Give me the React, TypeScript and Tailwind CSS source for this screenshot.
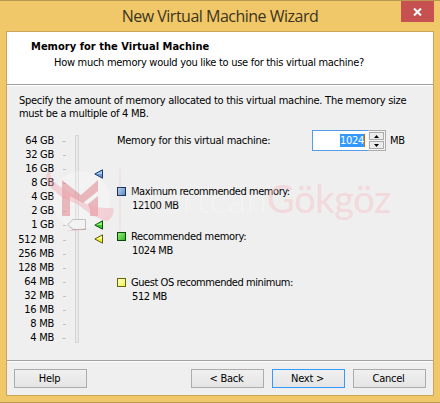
import React from "react";

const labels = ["64 GB", "32 GB", "16 GB", "8 GB", "4 GB", "2 GB", "1 GB", "512 MB", "256 MB", "128 MB", "64 MB", "32 MB", "16 MB", "8 MB", "4 MB"];

const wizardFont = "font-['DejaVu_Sans_Condensed','DejaVu_Sans',sans-serif]";

function Marker({ light, dark, edge }: { light: string; dark: string; edge: string }) {
  return (
    <svg width="10" height="10" viewBox="0 0 10 10" className="block">
      <path d="M0.8 5 L8.5 0.8 V9.2 Z" fill={dark} stroke={edge} />
      <path d="M2.5 5 L8 2 V5 Z" fill={light} />
    </svg>
  );
}

function Legend({ title, value, color, tracking }: { title: string; value: string; color: string; tracking: string }) {
  return (
    <div className="flex items-start">
      <span className={`mt-[3px] block h-[9px] w-[9px] border ${color}`} />
      <div className="ml-[5px] whitespace-nowrap pt-px leading-[14px]">
        <div className={tracking}>{title}</div>
        <div className="ml-px tracking-[-0.4px]">{value}</div>
      </div>
    </div>
  );
}

function Button({ children, active }: { children: React.ReactNode; active?: boolean }) {
  return (
    <button className={`h-[19px] w-[73px] border bg-linear-to-b from-[#f0f0f0] to-[#e5e5e5] pr-[2px] pt-px leading-[16px] ${active ? "border-[#3399ff]" : "border-[#acacac]"}`}>
      {children}
    </button>
  );
}

function Watermark() {
  return (
    <svg width="440" height="90" viewBox="0 160 440 90" className="pointer-events-none absolute left-0 top-[159px]">
      <circle cx="81" cy="200" r="29" fill="#fff" opacity=".25" />
      <g fill="#d8606c" opacity=".4">
        <path d="M62 180 L81 195 L98 180 V191 L83 203 L70 196 V216 H62 Z" />
        <path d="M88 204 L98 196 V216 H90 V210 Z" />
      </g>
      <path d="M51 173 C49 178 55 184 63 188 L83 202 C93 208 103 208 113 208 C115 210 112 220 107 221 C96 219 85 210 77 204 C68 200 60 197 56 192 C48 186 44 178 47 173 C48 171 51 171 51 173 Z" fill="#f0a4ae" opacity=".42" />
      <path d="M66 231.500 C70 229.500 76 230 86 228 C82 231 73 230 66 231.500 Z" fill="#f0a4ae" opacity=".6" />
      <path d="M120 169 V231" stroke="#f0a4ae" strokeWidth="2" opacity=".15" />
      <text x="128" y="213" textLength="139" fontFamily="Lato" fontWeight="300" fontSize="38" fill="#fff" opacity=".25">Mertcan</text>
      <text x="267" y="213" textLength="124" fontFamily="Lato" fontSize="38" fill="#f5bfc7" opacity=".45">Gökgöz</text>
    </svg>
  );
}

export default function App() {
  return (
    <div className={`relative flex h-[403px] w-[440px] flex-col border-y border-[#b99850] bg-[#f0c869] px-[6px] text-[11px] tracking-[-0.27px] text-black ${wizardFont}`}>
      <div className="relative flex h-[30px] items-center justify-center font-['Open_Sans',sans-serif] text-[16px] tracking-[-0.5px] text-[#3c3420]">
        <span className="whitespace-nowrap">New Virtual Machine Wizard</span>
        <span className="absolute right-0 top-0 flex h-[21px] w-[33px] items-center justify-center bg-[#c75050]">
          <svg width="9" height="8" viewBox="0 0 9 8"><path d="M1 .5 L8 7.500 M8 .5 L1 7.500" stroke="#fff" strokeWidth="2" /></svg>
        </span>
      </div>
      <div className="flex h-[365px] flex-col border border-[#c9a557] bg-[#efefef]">
        <header className="h-[53px] border-b border-[#a0a0a0] bg-white pl-[24px] pt-[7px] leading-4">
          <div className="whitespace-nowrap font-bold tracking-[0.03px]">Memory for the Virtual Machine</div>
          <div className="whitespace-nowrap pl-[23px] tracking-[-0.29px]">How much memory would you like to use for this virtual machine?</div>
        </header>
        <main className="h-[275px] border-t border-white pl-[12px] pt-[8px]">
          <p className="whitespace-nowrap leading-[13px]">Specify the amount of memory allocated to this virtual machine. The memory size<br />must be a multiple of 4 MB.</p>
          <div className="flex pt-[14px]">
            <div className="w-[35px]">
              {labels.map((l, i) => (
                <div key={l} className={`flex h-[14px] items-center justify-end whitespace-nowrap ${i === 7 ? "mt-px" : ""}`}>{l}</div>
              ))}
            </div>
            <div className="ml-[7px] w-[5px]">
              {labels.map((l, i) => (
                <div key={l} className={`flex h-[14px] items-center justify-end ${i === 7 ? "mt-px" : ""}`}>
                  <span className={`h-px bg-[#c4c4c4] ${i === 0 || i === 14 ? "w-[4px]" : "w-[3px]"}`} />
                </div>
              ))}
            </div>
            <div className="relative ml-[9px] mt-px h-[208px] w-[4px] border border-[#d6d6d6] bg-[#e7eaea]">
              <svg width="19" height="11" viewBox="0 0 19 11" className="absolute -left-[9px] top-[83px]">
                <path d="M.7 5.500 L6 .5 H18.500 V10.500 H6 Z" fill="#efefef" stroke="#acacac" />
              </svg>
            </div>
            <div className="ml-[15px] w-[10px] pt-[35px]">
              <Marker light="#a9cdf0" dark="#6b99d0" edge="#1c3c70" />
              <div className="h-[41px]" />
              <Marker light="#92ef78" dark="#3fc62b" edge="#075007" />
              <div className="h-[4px]" />
              <Marker light="#ffffb0" dark="#eeee30" edge="#5c5c08" />
            </div>
            <div className="ml-[13px]">
              <div className="flex h-[50px] items-start">
                <span className="w-[195px] whitespace-nowrap leading-[14px]">Memory for this virtual machine:</span>
                <div className="-mt-[4px] flex h-[21px] w-[74px] border border-[#569de5] bg-white">
                  <div className="flex flex-1 items-center justify-end pr-[3px]">
                    <span className="h-[13px] border-r border-[#d06b00] bg-[#3399ff] leading-[13px] text-white">1024</span>
                  </div>
                  <div className="-my-px -mr-px flex w-[18px] flex-col gap-px border-y border-r border-[#acacac] bg-[#f4f4f4] p-px">
                    {[0, 1].map((n) => (
                      <span key={n} className="flex flex-1 items-center justify-center border border-[#acacac] bg-[#ececec]">
                        <svg width="5" height="3" viewBox="0 0 5 3"><path d={n ? "M0 0 H5 L2.500 3 Z" : "M0 3 H5 L2.500 0 Z"} /></svg>
                      </span>
                    ))}
                  </div>
                </div>
                <span className="ml-[4px] leading-[14px]">MB</span>
              </div>
              <div className="h-[45px]">
                <Legend title="Maximum recommended memory:" value="12100 MB" tracking="tracking-[-0.44px]" color="border-[#16335f] bg-linear-to-br from-[#b4d0ef] to-[#5c8cc4]" />
              </div>
              <div className="h-[46px]">
                <Legend title="Recommended memory:" value="1024 MB" tracking="tracking-[-0.32px]" color="border-[#064806] bg-linear-to-br from-[#90ee76] to-[#30b820]" />
              </div>
              <Legend title="Guest OS recommended minimum:" value="512 MB" tracking="tracking-[-0.44px]" color="border-[#66660a] bg-linear-to-br from-[#ffffc0] to-[#f0f040]" />
            </div>
          </div>
        </main>
        <div className="h-[2px] border-b border-t border-b-white border-t-[#a0a0a0]" />
        <footer className="flex flex-1 gap-[8px] pl-[7px] pt-[7px]">
          <Button>Help</Button>
          <div className="w-[88px]" />
          <Button>&lt; Back</Button>
          <Button active>Next &gt;</Button>
          <Button>Cancel</Button>
        </footer>
      </div>
      <Watermark />
    </div>
  );
}
